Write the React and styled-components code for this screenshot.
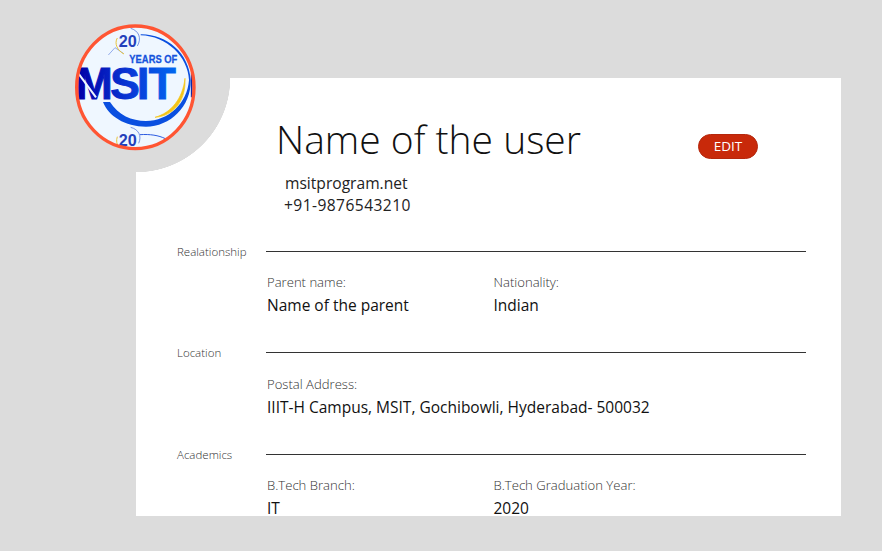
import styled, { createGlobalStyle } from "styled-components"

const GlobalStyle = createGlobalStyle`
html,body{
  margin:0;
  padding:0;
  height:100%;
  background:#dcdcdc;
  overflow:hidden;
}
`

const sections = [
  {
    title: "Realationship",
    rows: [
      [
        { label: "Parent name:", value: "Name of the parent" },
        { label: "Nationality:", value: "Indian" },
      ],
    ],
  },
  {
    title: "Location",
    rows: [[{ label: "Postal Address:", value: "IIIT-H Campus, MSIT, Gochibowli, Hyderabad- 500032" }]],
  },
  {
    title: "Academics",
    rows: [
      [
        { label: "B.Tech Branch:", value: "IT" },
        { label: "B.Tech Graduation Year:", value: "2020" },
      ],
    ],
  },
]

function Logo() {
  return (
    <LogoSvg viewBox="45 42 363 381">
      <defs>
        <linearGradient id="msit" gradientUnits="userSpaceOnUse" x1="57" x2="348" y1="0" y2="0">
          <stop offset="0" stopColor="#0000a8" />
          <stop offset="0.55" stopColor="#0a3bd8" />
          <stop offset="1" stopColor="#0068f0" />
        </linearGradient>
        <clipPath id="inside">
          <ellipse cx="226" cy="232" rx="176" ry="184" />
        </clipPath>
      </defs>
      <ellipse cx="226" cy="232" rx="176" ry="184" fill="#eff7ff" />
      <g clipPath="url(#inside)">
        <path d="M242 73 C320 72 388 130 392 210 C394 290 330 350 258 350 C195 350 145 318 129 276 L150 276 C175 315 215 333 258 333 C325 333 382 280 387 210 C384 140 320 78 242 76 Z" fill="#0a4fe0" />
        <path d="M285 322 C335 308 368 265 375 205 C378 275 340 318 285 322 Z" fill="#f5c518" stroke="#f5c518" strokeWidth="2" />
        <path d="M145 135 L165 113 L190 130" fill="none" stroke="#3a62d8" strokeWidth="1.5" />
        <path d="M172 84 C162 100 172 122 192 132" fill="none" stroke="#e8c23a" strokeWidth="3" />
        <path d="M212 55 C236 62 246 84 232 108" fill="none" stroke="#3a62d8" strokeWidth="2" />
        <LogoText x="176" y="110" fontSize="50" fill="#2340bb" textLength="54" lengthAdjust="spacingAndGlyphs">20</LogoText>
        <LogoText x="208" y="158" fontSize="33" fill="#1553dc" stroke="#1553dc" strokeWidth="0.8" textLength="144" lengthAdjust="spacingAndGlyphs">YEARS OF</LogoText>
        <path d="M395 190 L395 262" stroke="#0a2aa8" strokeWidth="5" />
        <path d="M212 352 C236 358 246 378 236 400" fill="none" stroke="#3a62d8" strokeWidth="2" />
        <path d="M240 374 C270 372 296 376 316 386" fill="none" stroke="#2c5be0" strokeWidth="3" />
        <path d="M172 380 C168 392 170 402 176 412" fill="none" stroke="#e8c23a" strokeWidth="3" />
        <LogoText x="176" y="407" fontSize="50" fill="#2340bb" textLength="54" lengthAdjust="spacingAndGlyphs">20</LogoText>
      </g>
      <LogoText x="47 151 231 266" y="266" fontSize="133" fill="url(#msit)" stroke="url(#msit)" strokeWidth="3">MSIT</LogoText>
      <path d="M55 190 L108 262" stroke="#eff7ff" strokeWidth="6" />
      <ellipse cx="226" cy="232" rx="176" ry="184" fill="none" stroke="#ff5533" strokeWidth="10" />
    </LogoSvg>
  )
}

function App() {
  return (
    <>
      <GlobalStyle />
      <Page>
        <Logo />
        <Card>
          <Header>
            <Name>Name of the user</Name>
            <EditButton>EDIT</EditButton>
          </Header>
          <Contact>
            <div>msitprogram.net</div>
            <Phone>+91-9876543210</Phone>
          </Contact>
          {sections.map((section) => (
            <Section key={section.title}>
              <SectionHead>
                <SectionTitle>{section.title}</SectionTitle>
                <Rule />
              </SectionHead>
              {section.rows.map((row, i) => (
                <Row key={i}>
                  {row.map((field) => (
                    <Field key={field.label}>
                      <FieldLabel>{field.label}</FieldLabel>
                      <FieldValue>{field.value}</FieldValue>
                    </Field>
                  ))}
                </Row>
              ))}
            </Section>
          ))}
        </Card>
      </Page>
    </>
  )
}

const Page = styled.div`
position:relative;
box-sizing:border-box;
width:882px;
height:551px;
padding:78px 41px 35px 136px;
font-family:"Open Sans","Noto Sans",sans-serif;
color:#111;
`
const LogoSvg = styled.svg`
position:absolute;
left:75px;
top:24px;
width:121px;
height:127px;
z-index:2;
`
const LogoText = styled.text`
font-family:"Liberation Sans",Arial,sans-serif;
font-weight:700;
`
const Card = styled.main`
box-sizing:border-box;
width:705px;
height:438px;
overflow:hidden;
padding:34px 35px 0 41px;
background:radial-gradient(circle at 0 0,#dcdcdc 94px,#fff 94.5px);
`
const Header = styled.header`
display:flex;
align-items:flex-start;
padding-left:99px;
height:54px;
`
const Name = styled.h1`
margin:0;
width:422px;
font-size:39px;
line-height:54px;
font-weight:300;
color:#111;
`
const EditButton = styled.button`
box-sizing:border-box;
width:60px;
height:25px;
margin-top:22px;
padding:0 0 2px;
background:#c8290a;
border:1px solid #b5270c;
border-radius:13px;
color:#fff;
font-family:"Open Sans",sans-serif;
font-size:13.5px;
font-weight:500;
line-height:20px;
`
const Contact = styled.div`
margin-top:6px;
padding-left:108px;
font-size:15.6px;
line-height:22px;
font-weight:400;
color:#222;
`
const Phone = styled.div`
margin-left:-1px;
letter-spacing:.42px;
`
const Section = styled.section`
height:101.5px;
&:first-of-type{
  margin-top:25px;
}
`
const SectionHead = styled.div`
display:flex;
align-items:center;
height:20px;
`
const SectionTitle = styled.div`
width:89px;
flex:none;
font-size:11.5px;
line-height:20px;
margin-top:1px;
font-weight:300;
color:#333;
`
const Rule = styled.div`
flex:1;
height:1px;
background:#333;
`
const Row = styled.div`
display:flex;
padding-left:90px;
margin-top:11px;
`
const Field = styled.div`
width:226.5px;
flex:none;
white-space:nowrap;
`
const FieldLabel = styled.div`
font-size:13.1px;
line-height:20px;
font-weight:300;
color:#333;
`
const FieldValue = styled.div`
margin-top:2px;
font-size:15.5px;
line-height:22px;
color:#111;
`

export default App
